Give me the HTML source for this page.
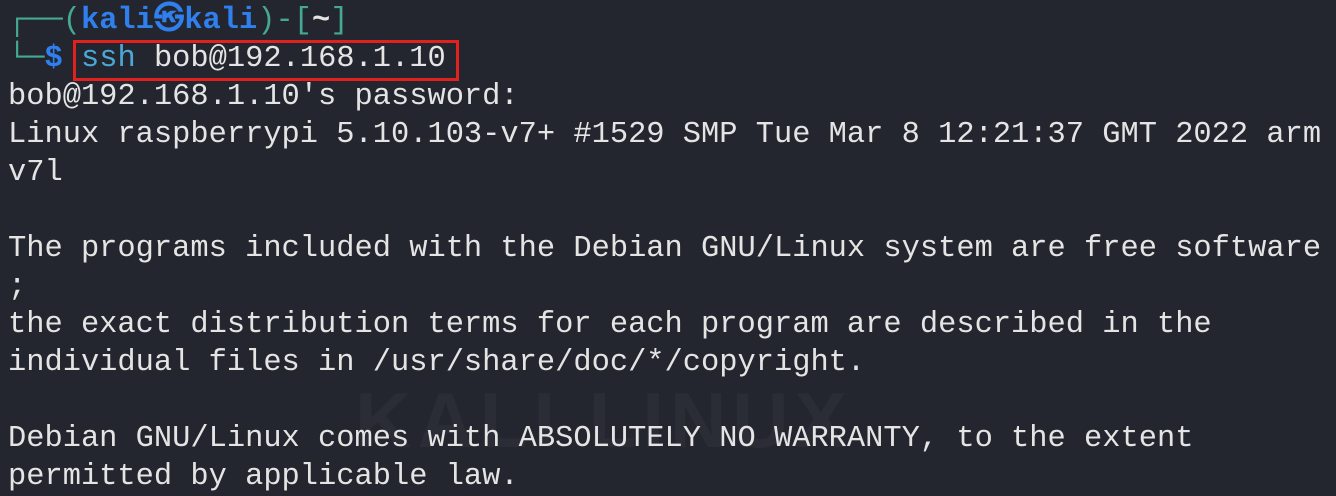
<!DOCTYPE html>
<html><head><meta charset="utf-8"><style>
html,body{margin:0;padding:0;background:#24262f;width:1336px;height:494px;overflow:hidden}
.t{position:absolute;left:8px;top:2px;font-family:"Liberation Mono","DejaVu Sans Mono",monospace;font-size:30.4px;line-height:38px;color:#e4e4e4;white-space:pre}
.g{color:#45a894}.b{color:#2f80ee;font-weight:bold}.s{color:#4aa8d8}
.box{position:absolute;left:73px;top:40px;width:380px;height:35px;border:3px solid #e0211d}
.wm{position:absolute;left:355px;top:375px;font-family:"Liberation Sans",sans-serif;font-weight:bold;font-size:78px;color:#2a2c36;letter-spacing:6px}
</style></head><body>
<div class="wm">KALI LINUX</div>
<div class="t"><span class="g">┌──(</span><span class="b">kali㉿kali</span><span class="g">)-[</span><span style="font-weight:bold">~</span><span class="g">]</span>
<span class="g">└─</span><span class="b">$</span> <span class="s">ssh</span> bob@192.168.1.10
bob@192.168.1.10's password:
Linux raspberrypi 5.10.103-v7+ #1529 SMP Tue Mar 8 12:21:37 GMT 2022 arm
v7l

The programs included with the Debian GNU/Linux system are free software
;
the exact distribution terms for each program are described in the
individual files in /usr/share/doc/*/copyright.

Debian GNU/Linux comes with ABSOLUTELY NO WARRANTY, to the extent
permitted by applicable law.</div>
<div class="box"></div>
</body></html>
